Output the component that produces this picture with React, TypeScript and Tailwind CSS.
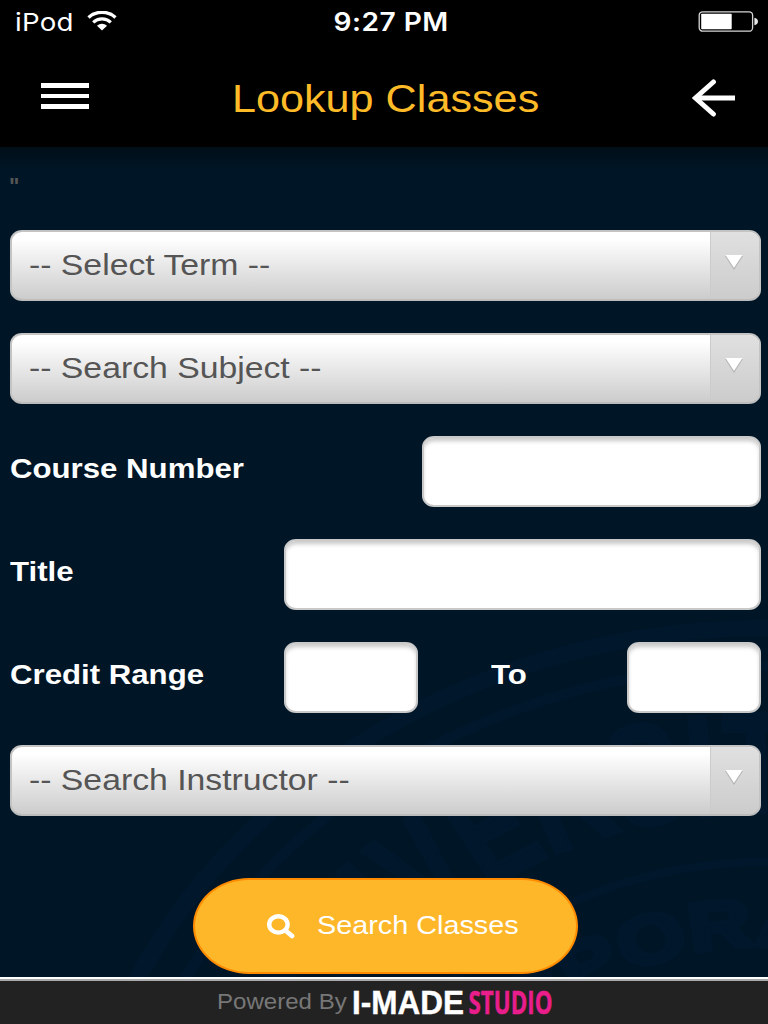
import { clsx } from 'clsx';
import type { ReactNode } from 'react';

interface WideTextProps {
  children: ReactNode;
  className?: string;
}

interface SelectFieldProps {
  label: string;
}

interface TextFieldProps {
  label: string;
  className: string;
}

// Labels are set slightly extended horizontally.
function WideText({ children, className }: WideTextProps) {
  return <span className={clsx('inline-block scale-x-[1.125] whitespace-pre', className)}>{children}</span>;
}

function StatusBar() {
  return (
    <div className="flex h-11 items-center justify-between pl-[15px] pr-[10px] font-['Inter',sans-serif] text-white">
      <div className="flex w-[200px] items-center">
        <WideText className="w-[64px] origin-left text-[24.6px] leading-[44px] tracking-[0.2px]">iPod</WideText>
        <svg className="ml-[8px] -mt-[2px] h-[20px] w-[30px]" fill="none" viewBox="0 0 30 20">
          <path d="M1.5 6.4C9 -0.4 21 -0.4 28.5 6.4" stroke="white" strokeWidth="3.4" />
          <path d="M6.2 11.4C11.2 6.8 18.8 6.8 23.8 11.4" stroke="white" strokeWidth="3.2" />
          <path d="M10 14.8C12.8 12 17.2 12 20 14.8L15 19.4Z" fill="white" />
        </svg>
      </div>
      <WideText className="ml-[9px] text-[25px] font-semibold leading-[44px] tracking-[0.4px]">9:27 PM</WideText>
      <div className="flex w-[200px] justify-end">
        <svg className="-mt-[1px] h-[21px] w-[60px]" viewBox="0 0 60 21">
          <rect fill="none" height="19.4" rx="3.5" stroke="#d6d6d6" strokeWidth="1.3" width="53.4" x="1.2" y="0.8" />
          <rect fill="white" height="15.6" rx="0.8" width="30.5" x="3.2" y="2.7" />
          <path d="M56.4 6.8C58.4 7 60 8.5 60 10.5C60 12.5 58.4 14 56.4 14.2Z" fill="#e8e8e8" />
        </svg>
      </div>
    </div>
  );
}

function NavBar() {
  return (
    <div className="flex h-[103px] items-center justify-between pl-[41px] pr-[33px]">
      <button aria-label="Menu" className="mt-[1px] flex w-[48px] flex-col gap-[6px]" type="button">
        <span className="h-[4.5px] w-full bg-white" />
        <span className="h-[4.5px] w-full bg-white" />
        <span className="h-[4.5px] w-full bg-white" />
      </button>
      <h1 className="mt-[6px] pr-[10px] text-[38.4px] leading-[48px] text-[#febb28]">
        <WideText>Lookup Classes</WideText>
      </h1>
      <button aria-label="Back" className="mt-[4px]" type="button">
        <svg className="h-[38px] w-[43px]" fill="none" viewBox="0 0 43 38">
          <path d="M43 19H5" stroke="white" strokeWidth="5" />
          <path d="M21.4 3L3.4 19L21.4 35" stroke="white" strokeLinecap="round" strokeWidth="5" />
        </svg>
      </button>
    </div>
  );
}

function Seal() {
  return (
    <svg aria-hidden="true" className="absolute inset-0 h-full w-full" viewBox="0 147 768 830">
      <g transform="translate(765 1247) scale(1.125 1)">
        <g fill="none" stroke="#00172c">
          <circle r="619" strokeWidth="16" />
          <circle r="581" strokeWidth="10" />
          <circle r="385" strokeWidth="8" />
        </g>
        <path d="M-435 0A435 435 0 0 1 435 0" fill="none" id="seal-outer" />
        <path d="M-301 0A301 301 0 0 1 301 0" fill="none" id="seal-inner" />
        <g fill="#00172c" fontFamily="Liberation Sans, sans-serif" fontWeight="700" stroke="#00172c" strokeWidth="5">
          <text fontSize="142">
            <textPath href="#seal-outer" lengthAdjust="spacingAndGlyphs" startOffset="190" textLength="580">
              UNIVERSITY
            </textPath>
          </text>
          <text fontSize="68">
            <textPath href="#seal-inner" lengthAdjust="spacingAndGlyphs" startOffset="44" textLength="625">
              INCORPORATED
            </textPath>
          </text>
        </g>
      </g>
    </svg>
  );
}

function SelectField({ label }: SelectFieldProps) {
  return (
    <button
      className="flex h-[71px] w-full overflow-hidden rounded-[12px/11px] border-2 border-[#c4c4c4] border-b-[#bcbcbc] bg-linear-to-b from-white from-10% to-[#cccccc] text-left"
      type="button"
    >
      <span className="flex-1 pl-[17px] text-[30px] leading-[65px] text-[#555555]">
        <WideText className="origin-left">{label}</WideText>
      </span>
      <span className="flex h-full w-[49px] justify-center border-l border-[#cbcbcb] bg-linear-to-b from-[#e0e0e0] to-[#cccccc] pr-[3px] pt-[22px]">
        <svg className="h-[17px] w-[18px]" viewBox="0 0 18 17">
          <path d="M0 2H18L9 16Z" fill="#b3b3b3" />
          <path d="M0.5 1H17.5L9 14Z" fill="white" />
        </svg>
      </span>
    </button>
  );
}

function TextField({ label, className }: TextFieldProps) {
  return (
    <input
      aria-label={label}
      className={clsx(
        'h-[71px] rounded-[12px/11px] border-2 border-[#c9c9c9] bg-white shadow-[inset_0_4px_4px_-1px_#c8c8c8] outline-none',
        className
      )}
      type="text"
    />
  );
}

function FieldLabel({ children }: { children: ReactNode }) {
  return (
    <span className="-mt-[5px] text-[27.73px] font-bold leading-[36px] text-white">
      <WideText className="origin-left">{children}</WideText>
    </span>
  );
}

function SearchForm() {
  return (
    <form className="relative flex flex-col gap-8 pl-[10px] pr-[7px]">
      <SelectField label="-- Select Term --" />
      <SelectField label="-- Search Subject --" />
      <div className="flex items-center justify-between">
        <FieldLabel>Course Number</FieldLabel>
        <TextField className="w-[339px]" label="Course Number" />
      </div>
      <div className="flex items-center justify-between">
        <FieldLabel>Title</FieldLabel>
        <TextField className="w-[477px]" label="Title" />
      </div>
      <div className="grid grid-cols-[274px_134px_1fr_134px] items-center">
        <FieldLabel>Credit Range</FieldLabel>
        <TextField className="w-full" label="Minimum credits" />
        <div className="flex pl-[73px]">
          <FieldLabel>To</FieldLabel>
        </div>
        <TextField className="w-full" label="Maximum credits" />
      </div>
      <SelectField label="-- Search Instructor --" />
      <button
        className="ml-[183px] mt-[30px] flex h-[96px] w-[385px] items-center rounded-[56px/48px] border-2 border-[#ff8c00] bg-[#feb729] pl-[72px] text-[25.6px] text-white"
        type="button"
      >
        <svg className="h-[25px] w-[28px]" fill="none" viewBox="0 0 28 25">
          <ellipse cx="11.4" cy="10.4" rx="9.2" ry="8.2" stroke="white" strokeWidth="4.4" />
          <path d="M18.5 16.5L25 22" stroke="white" strokeLinecap="round" strokeWidth="4.8" />
        </svg>
        <WideText className="-mt-[2px] ml-[21.5px] origin-left">Search Classes</WideText>
      </button>
    </form>
  );
}

function Footer() {
  return (
    <footer className="flex h-[47px] border-t-2 border-white bg-[#222222]">
      <div className="flex w-full border-t-2 border-[#aaaaaa] pl-[217px]">
        <span className="w-[136px] text-[21.4px] leading-[42px] text-[#777777]">
          <WideText className="origin-left">Powered By</WideText>
        </span>
        <svg className="h-[43px] w-[202px]" viewBox="0 0 202 43">
          <text
            fill="white"
            fontFamily="Liberation Sans, sans-serif"
            fontSize="33"
            fontWeight="700"
            lengthAdjust="spacingAndGlyphs"
            stroke="white"
            strokeWidth="0.4"
            textLength="112"
            x="-1"
            y="33"
          >
            I-MADE
          </text>
          <text
            fill="#e91e8c"
            fontFamily="Open Sans, sans-serif"
            fontSize="33"
            fontWeight="700"
            lengthAdjust="spacingAndGlyphs"
            stroke="#e91e8c"
            strokeWidth="0.5"
            textLength="84"
            x="115.5"
            y="33"
          >
            STUDIO
          </text>
        </svg>
      </div>
    </footer>
  );
}

export default function App() {
  return (
    <div className="flex h-[1024px] w-[768px] flex-col overflow-hidden bg-black font-['Liberation_Sans',Arial,sans-serif]">
      <header className="bg-black">
        <StatusBar />
        <NavBar />
      </header>
      <main className="relative flex-1 overflow-hidden bg-[#001626] bg-linear-to-b from-[#000e18] to-[#001626] to-[24px]">
        <Seal />
        <p className="relative h-[83px] pl-[9px] pt-[24px] text-[23px] font-bold leading-[32px] text-[#555555]">
          <span className="inline-block origin-left scale-x-[0.95]">"</span>
        </p>
        <SearchForm />
      </main>
      <Footer />
    </div>
  );
}
